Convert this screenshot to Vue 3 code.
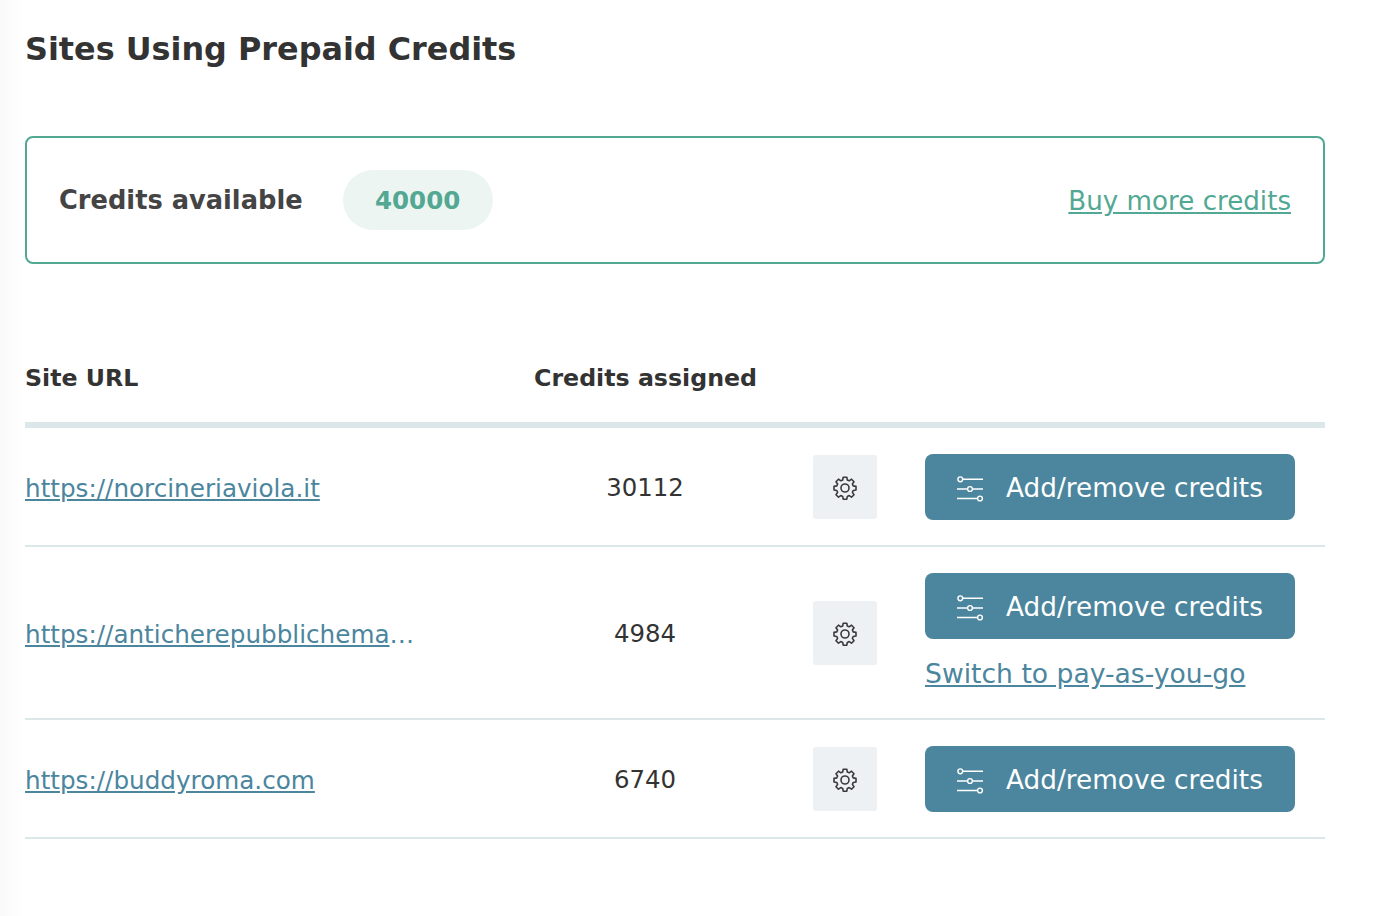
<script setup>
const rows = [
  { url: 'https://norcineriaviola.it', credits: 30112, switchable: false },
  { url: 'https://anticherepubblichemarinare.it', credits: 4984, switchable: true },
  { url: 'https://buddyroma.com', credits: 6740, switchable: false }
]
</script>

<template>
  <main class="page">
    <h1 class="title">Sites Using Prepaid Credits</h1>

    <section class="card">
      <strong class="card-label">Credits available</strong>
      <span class="pill">40000</span>
      <a class="buy" href="#">Buy more credits</a>
    </section>

    <div class="head">
      <span class="col-url">Site URL</span>
      <span class="col-credits">Credits assigned</span>
    </div>

    <div v-for="row in rows" :key="row.url" class="row">
      <div class="col-url"><a class="site" href="#">{{ row.url }}</a></div>
      <div class="col-credits">{{ row.credits }}</div>
      <button class="gear" type="button" aria-label="Settings">
        <svg width="26" height="26" viewBox="0 -1 26 26" fill="none" stroke="#3a3a3a" stroke-width="1.6" stroke-linejoin="round">
          <path d="M11.2 2.2h3.6l.5 2.8 1.9.8 2.3-1.6 2.5 2.5-1.6 2.3.8 1.9 2.8.5v3.6l-2.8.5-.8 1.9 1.6 2.3-2.5 2.5-2.3-1.6-1.9.8-.5 2.8h-3.6l-.5-2.8-1.9-.8-2.3 1.6-2.5-2.5 1.6-2.3-.8-1.9-2.8-.5v-3.6l2.8-.5.8-1.9-1.6-2.3 2.5-2.5 2.3 1.6 1.9-.8z" />
          <circle cx="13" cy="13" r="4" />
        </svg>
      </button>
      <div class="actions">
        <button class="add" type="button">
          <svg width="28" height="30" viewBox="0 0 28 30" fill="none" stroke="#fff" stroke-width="1.4">
            <path d="M7 7.3h20M1 17h10M17 17h10M1 26.5h20" />
            <circle cx="4.3" cy="7.3" r="2.4" />
            <circle cx="14" cy="17" r="2.4" />
            <circle cx="24" cy="26.5" r="2.4" />
          </svg>
          <span>Add/remove credits</span>
        </button>
        <a v-if="row.switchable" class="switch" href="#">Switch to pay-as-you-go</a>
      </div>
    </div>
  </main>
</template>

<style scoped>
.page {
  box-sizing: border-box;
  width: 1398px;
  height: 916px;
  padding: 26px 73px 0 25px;
  overflow: hidden;
  font-family: "DejaVu Sans", Verdana, sans-serif;
  color: #333;
  background: linear-gradient(90deg, #f9f9f9 0, #fdfdfd 14px, #fff 24px);
}
.title {
  margin: 0;
  font-size: 31.85px;
  line-height: 46px;
  font-weight: 700;
  color: #333;
}
.card {
  box-sizing: border-box;
  display: flex;
  align-items: center;
  height: 128px;
  margin-top: 64px;
  padding: 0 32px;
  border: 2px solid #52a893;
  border-radius: 8px;
  background: #fff;
}
.card-label {
  font-size: 25.7px;
  color: #444;
}
.pill {
  display: flex;
  align-items: center;
  justify-content: center;
  width: 150px;
  height: 60px;
  margin-left: 40px;
  border-radius: 30px;
  background: #edf5f2;
  color: #52a893;
  font-size: 24.5px;
  font-weight: 700;
}
.buy {
  margin-left: auto;
  padding-top: 2px;
  font-size: 26.15px;
  color: #52a893;
}
.head {
  box-sizing: border-box;
  display: grid;
  grid-template-columns: 509px 222px;
  align-items: center;
  height: 164px;
  padding: 92px 0 22px;
  border-bottom: 6px solid #dce7ea;
  font-size: 23.7px;
  font-weight: 700;
}
.head .col-credits {
  white-space: nowrap;
}
.row {
  display: grid;
  grid-template-columns: 509px 222px 64px auto;
  align-items: center;
  padding: 26px 0 25px;
  border-bottom: 2px solid #dce7ea;
  font-size: 24.4px;
}
.col-credits {
  text-align: center;
}
.site {
  display: block;
  max-width: 390px;
  padding-top: 2px;
  overflow: hidden;
  white-space: nowrap;
  text-overflow: ellipsis;
  font-size: 24.67px;
  color: #4b869e;
}
.gear {
  display: flex;
  align-items: center;
  justify-content: center;
  width: 64px;
  height: 64px;
  margin-left: 57px;
  padding: 0;
  border: 0;
  border-radius: 3px;
  background: #edf1f4;
}
.actions {
  display: flex;
  flex-direction: column;
  margin-left: 105px;
  width: 370px;
}
.add {
  display: flex;
  align-items: center;
  width: 370px;
  height: 66px;
  padding: 0 0 0 31px;
  border: 0;
  border-radius: 8px;
  background: #4b869e;
  color: #fff;
  font-family: inherit;
  font-size: 26.3px;
}
.add span {
  margin-left: 22px;
  padding-top: 2px;
}
.switch {
  margin-top: 17px;
  margin-bottom: 1px;
  font-size: 26.6px;
  line-height: 36px;
  color: #4b869e;
}
</style>
